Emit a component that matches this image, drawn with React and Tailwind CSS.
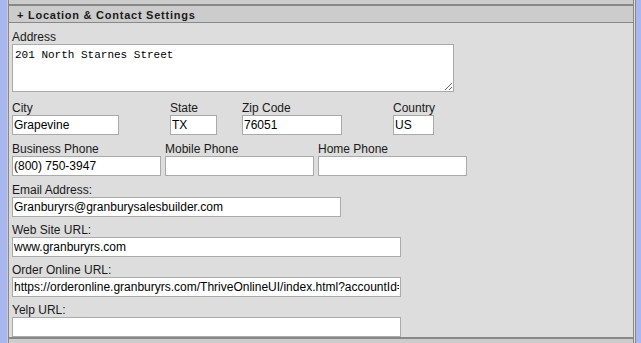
const SANS = "font-['Liberation_Sans',Arial,sans-serif]";

function SectionHeader({ title }) {
  return (
    <div className="shrink-0 border-t-2 border-b border-[#888] bg-[#ccc] h-[19px] pl-[8px] flex items-center">
      <span className={`${SANS} text-[11px] font-bold tracking-[0.75px] text-[#1a1a1a] leading-[16px] pt-[1px]`}>
        {title}
      </span>
    </div>
  );
}

function Label({ children }) {
  return <div className={`${SANS} text-[12px] leading-[14px] h-[14px] text-[#1a1a1a] whitespace-nowrap`}>{children}</div>;
}

function Field({ width, value = "" }) {
  return (
    <input
      readOnly
      defaultValue={value}
      className={`${SANS} block h-[20px] border border-[#aaa] bg-white px-[1px] text-[12px] text-black outline-none`}
      style={{ width }}
    />
  );
}

export default function App() {
  return (
    <div className="w-[641px] h-[343px] overflow-hidden bg-[#a9b7f1] pl-[7px]">
      <div className="w-[629px] h-full border-l border-l-[#ccc] border-r border-r-[#888] pr-[1px] bg-[#ddd]">
        <div className="h-full border-x border-[#888] flex flex-col">
          {/* bottom edge of the previous section header */}
          <div className="h-[4px] shrink-0 bg-[#ccc]" />

          <SectionHeader title="+ Location & Contact Settings" />

          <div className="h-[314px] shrink-0 overflow-hidden bg-[#ddd] pt-[7px] pl-[3px]">
            <Label>Address</Label>
            <textarea
              readOnly
              defaultValue="201 North Starnes Street"
              className="block w-[442px] h-[48px] border border-[#aaa] bg-white px-[2px] pt-[3px] font-['Liberation_Mono',monospace] text-[11px] leading-[14px] text-black outline-none resize"
            />

            <div className="flex mt-[9px]">
              <div className="w-[158px]">
                <Label>City</Label>
                <Field width={107} value="Grapevine" />
              </div>
              <div className="w-[72px]">
                <Label>State</Label>
                <Field width={47} value="TX" />
              </div>
              <div className="w-[151px]">
                <Label>Zip Code</Label>
                <Field width={100} value="76051" />
              </div>
              <div>
                <Label>Country</Label>
                <Field width={41} value="US" />
              </div>
            </div>

            <div className="flex gap-[4px] mt-[7px]">
              <div>
                <Label>Business Phone</Label>
                <Field width={149} value="(800) 750-3947" />
              </div>
              <div>
                <Label>Mobile Phone</Label>
                <Field width={149} />
              </div>
              <div>
                <Label>Home Phone</Label>
                <Field width={149} />
              </div>
            </div>

            <div className="mt-[7px]">
              <Label>Email Address:</Label>
              <Field width={329} value="Granburyrs@granburysalesbuilder.com" />
            </div>
            <div className="mt-[6px]">
              <Label>Web Site URL:</Label>
              <Field width={389} value="www.granburyrs.com" />
            </div>
            <div className="mt-[6px]">
              <Label>Order Online URL:</Label>
              <Field width={389} value="https://orderonline.granburyrs.com/ThriveOnlineUI/index.html?accountId=1042" />
            </div>
            <div className="mt-[6px]">
              <Label>Yelp URL:</Label>
              <Field width={389} />
            </div>
          </div>

          {/* top edge of the next section header */}
          <div className="border-t-2 border-[#888] bg-[#ccc] h-[20px] shrink-0" />
        </div>
      </div>
    </div>
  );
}
